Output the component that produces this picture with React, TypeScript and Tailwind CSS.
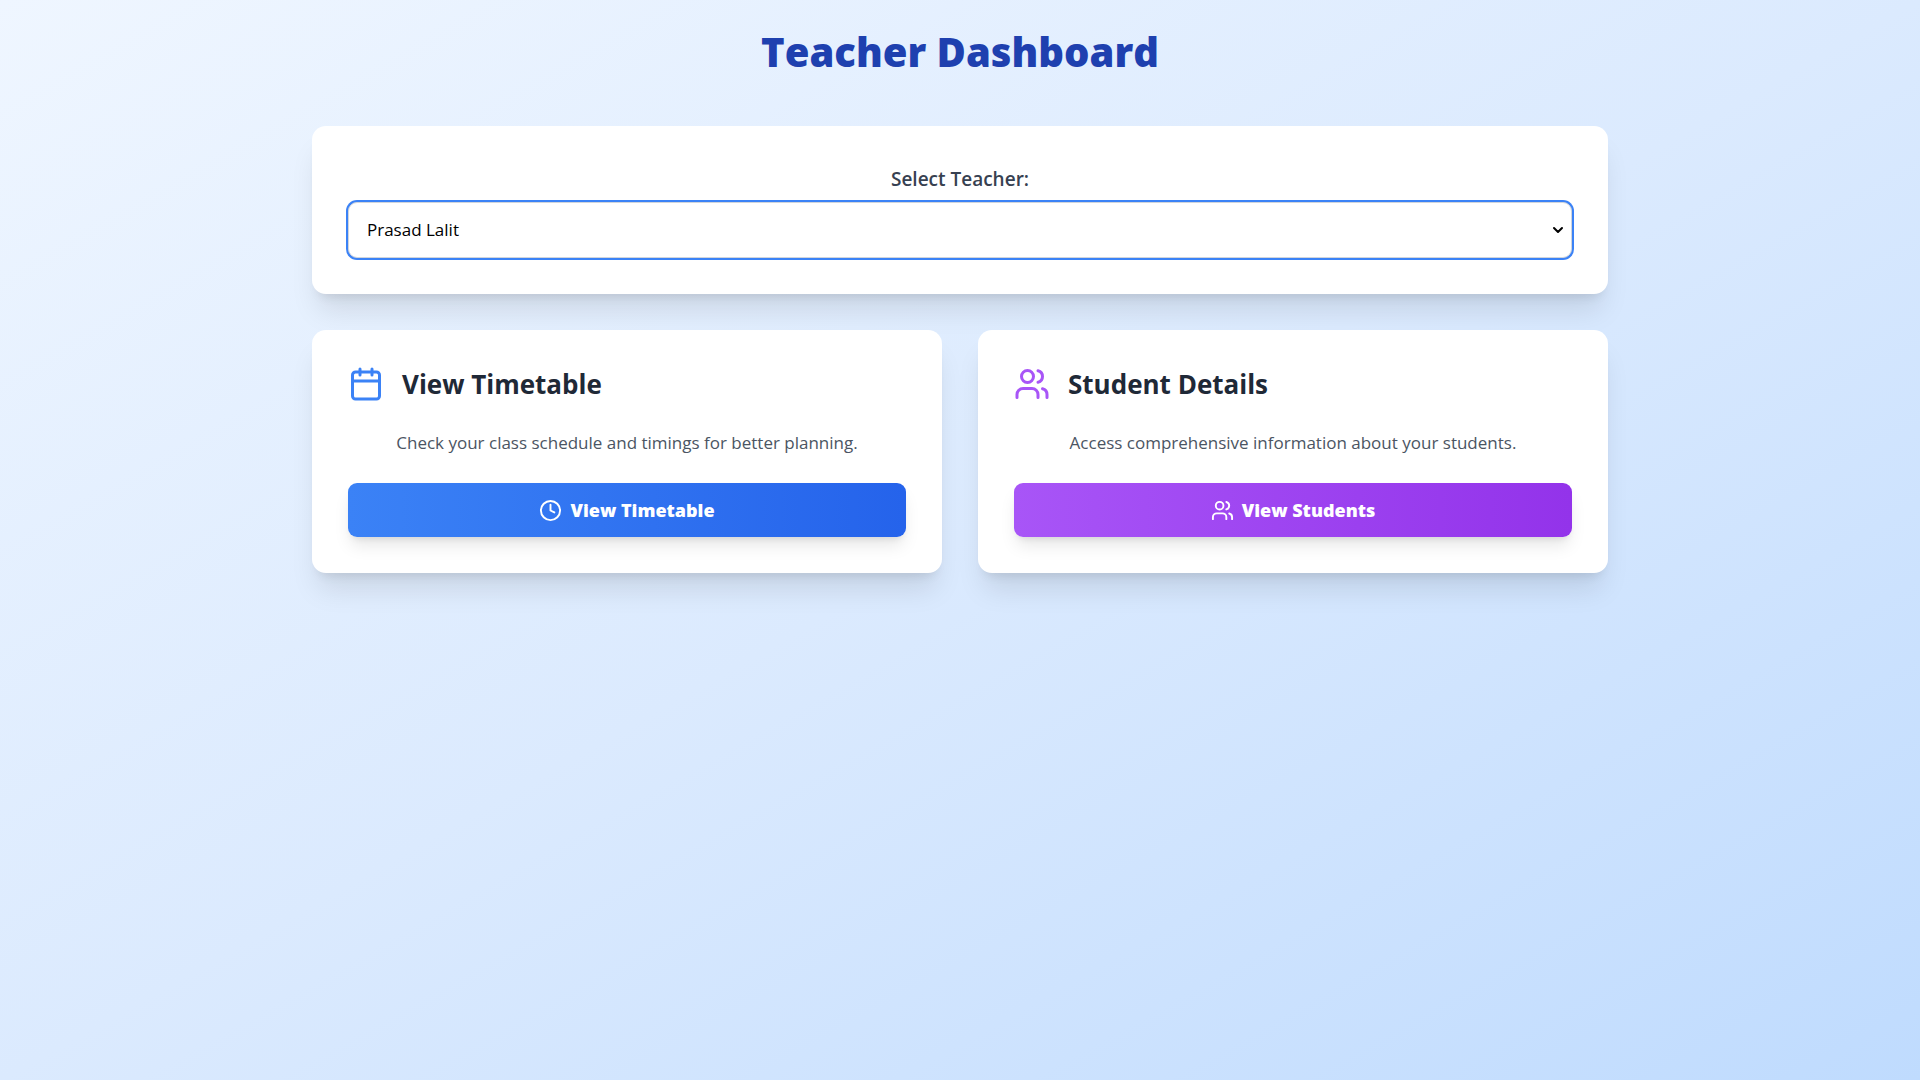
import { useState } from "react";
import type { ReactNode } from "react";
import { Calendar, ChevronDown, Clock, Users } from "lucide-react";

const cardClass =
  "rounded-[14px] bg-white p-9 shadow-[0_22px_28px_-6px_rgb(0_0_0/0.1),0_9px_11px_-7px_rgb(0_0_0/0.1)]";

type ActionCardProps = {
  icon: ReactNode;
  title: string;
  description: string;
  buttonIcon: ReactNode;
  buttonLabel: string;
  buttonClass: string;
};

function ActionCard({ icon, title, description, buttonIcon, buttonLabel, buttonClass }: ActionCardProps) {
  return (
    <section className={cardClass}>
      <div className="flex items-center gap-[18px]">
        {icon}
        <h2 className="text-[26px] leading-9 font-bold text-[#1f2937]">{title}</h2>
      </div>
      <p className="my-[27px] text-center text-[17px] leading-[27px] text-[#4b5563]">{description}</p>
      <button
        type="button"
        className={`flex h-[54px] w-full items-center justify-center gap-2 rounded-[9px] text-lg font-extrabold text-white shadow-[0_11px_17px_-3px_rgb(0_0_0/0.1),0_5px_7px_-4px_rgb(0_0_0/0.1)] ${buttonClass}`}
      >
        {buttonIcon}
        {buttonLabel}
      </button>
    </section>
  );
}

export default function App() {
  const [teacher, setTeacher] = useState("Prasad Lalit");
  return (
    <div className="min-h-screen bg-linear-to-br/srgb from-[#eff6ff] via-[#dbeafe] to-[#bfdbfe] px-8 py-8 font-['Segoe_UI','Open_Sans',sans-serif]">
      <main className="mx-auto max-w-[1296px]">
        <h1 className="mb-[54px] text-center text-[40px] leading-10 font-extrabold text-[#1e40af]">
          Teacher Dashboard
        </h1>
        <section className={`mb-9 ${cardClass}`}>
          <label htmlFor="teacher" className="mb-1.5 block text-center text-[19px] leading-[34px] font-semibold text-[#374151]">
            Select Teacher:
          </label>
          <div className="relative">
            <select
              id="teacher"
              value={teacher}
              onChange={(e) => setTeacher(e.target.value)}
              className="block h-14 w-full appearance-none rounded-[9px] border border-[#d1d5db] bg-white px-[18px] text-[17px] text-black ring-2 ring-[#3b82f6] outline-none"
            >
              <option>Prasad Lalit</option>
            </select>
            <ChevronDown
              className="pointer-events-none absolute top-1/2 right-1.5 size-4 -translate-y-1/2 text-black"
              strokeWidth={3}
            />
          </div>
        </section>
        <div className="grid gap-9 md:grid-cols-2">
          <ActionCard
            icon={<Calendar className="size-9 text-[#3b82f6]" />}
            title="View Timetable"
            description="Check your class schedule and timings for better planning."
            buttonIcon={<Clock className="size-[23px]" />}
            buttonLabel="View Timetable"
            buttonClass="bg-linear-to-r/srgb from-[#3b82f6] to-[#2563eb]"
          />
          <ActionCard
            icon={<Users className="size-9 text-[#a855f7]" />}
            title="Student Details"
            description="Access comprehensive information about your students."
            buttonIcon={<Users className="size-[23px]" />}
            buttonLabel="View Students"
            buttonClass="bg-linear-to-r/srgb from-[#a855f7] to-[#9333ea]"
          />
        </div>
      </main>
    </div>
  );
}
